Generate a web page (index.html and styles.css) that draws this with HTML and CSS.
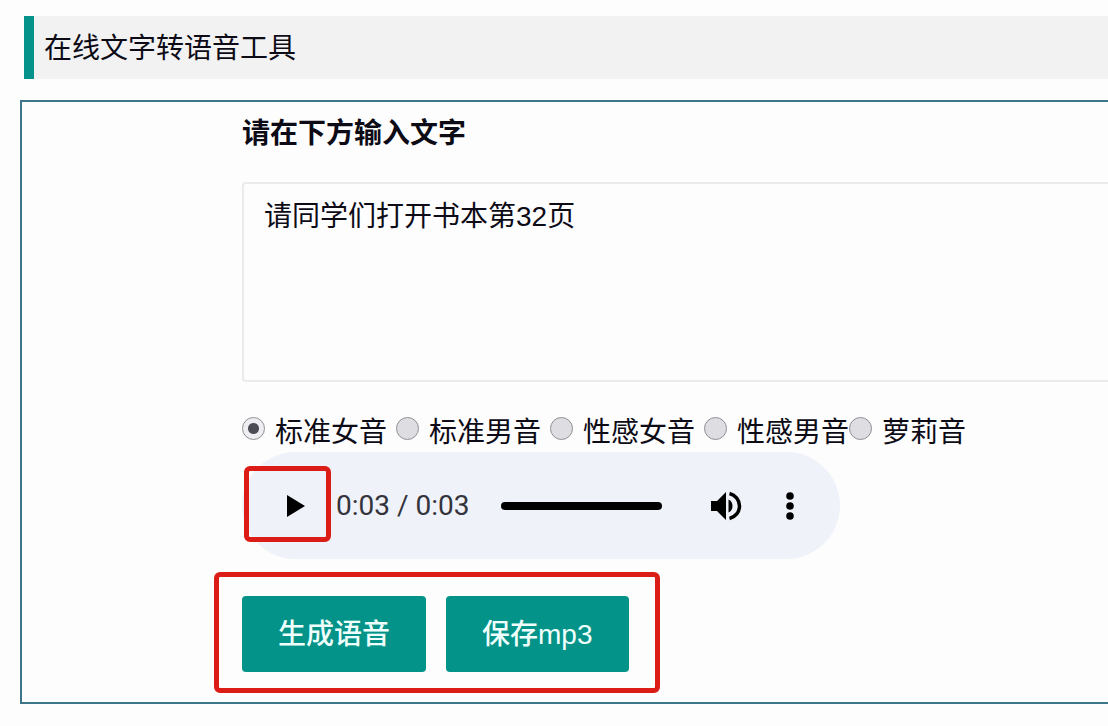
FILE: index.html
```html
<!DOCTYPE html>
<html lang="zh-CN">
<head>
<meta charset="utf-8">
<title>在线文字转语音工具</title>
<link rel="stylesheet" href="styles.css">
</head>
<body>
<h1 class="page-title">在线文字转语音工具</h1>
<main class="panel">
  <label class="field-label" for="source">请在下方输入文字</label>
  <textarea class="source" id="source">请同学们打开书本第32页</textarea>
  <div class="voices" role="radiogroup" aria-label="音色">
    <label class="voice"><input type="radio" name="voice" checked>标准女音</label>
    <label class="voice"><input type="radio" name="voice">标准男音</label>
    <label class="voice"><input type="radio" name="voice">性感女音</label>
    <label class="voice"><input type="radio" name="voice">性感男音</label>
    <label class="voice voice-last"><input type="radio" name="voice">萝莉音</label>
  </div>
  <div class="player">
    <button class="icon-button play" type="button" aria-label="播放">
      <svg width="20" height="24" viewBox="0 0 20 24"><path d="M1 1v22l18-11z"/></svg>
    </button>
    <span class="time">0:03 / 0:03</span>
    <span class="track"></span>
    <button class="icon-button volume" type="button" aria-label="音量">
      <svg width="32" height="30" viewBox="0 0 32 30"><path d="M1 10h6l9-9v28l-9-9H1z"/><path d="M18.500 8.500v13c2.500-1 4-3.500 4-6.500s-1.500-5.500-4-6.500z"/><path d="M19.500 2.500c6 1.500 10 6.500 10 12.500s-4 11-10 12.500" fill="none" stroke="#000" stroke-width="3.500"/></svg>
    </button>
    <button class="icon-button more" type="button" aria-label="更多">
      <svg width="8" height="28" viewBox="0 0 8 28"><circle cx="4" cy="4" r="3.800"/><circle cx="4" cy="14" r="3.800"/><circle cx="4" cy="24" r="3.800"/></svg>
    </button>
    <span class="mark mark-play"></span>
  </div>
  <div class="actions">
    <button class="action" type="button">生成语音</button>
    <button class="action" type="button">保存mp3</button>
    <span class="mark mark-actions"></span>
  </div>
</main>
</body>
</html>
```
FILE: styles.css
```css
* {
  box-sizing: border-box;
}

body {
  margin: 0;
  padding: 16px 0 20px 20px;
  background: #fdfdfd;
  color: #0c0b16;
  font: 28px/40px "Liberation Sans", "Noto Sans CJK SC", sans-serif;
}

button,
textarea {
  font: inherit;
}

.page-title {
  margin: 0 0 21px 4px;
  padding: 13px 10px 10px;
  border-left: 10px solid #05928b;
  background: #f2f2f3;
  font-size: 28px;
  font-weight: 400;
}

.panel {
  padding: 12px 0 30px 220px;
  border: 2px solid #3d7787;
  border-right: 0;
}

.field-label {
  display: block;
  font-weight: 700;
}

.source {
  display: block;
  width: 100%;
  height: 200px;
  margin: 28px 0 28px;
  padding: 13px 20px;
  border: 2px solid #ebebeb;
  border-right: 0;
  border-radius: 4px 0 0 4px;
  outline: 0;
  background: #fdfdfd;
  color: inherit;
  resize: none;
}

.voices {
  display: flex;
  gap: 9px;
  height: 42px;
}

.voice {
  display: flex;
  gap: 10px;
  line-height: 46px;
  white-space: nowrap;
}

.voice-last {
  margin-left: -9px;
}

.voice input {
  appearance: none;
  flex: none;
  width: 23px;
  height: 23px;
  margin: 7px 0 0;
  border: 1px solid #8f8f94;
  border-radius: 50%;
  background: #dedee2;
}

.voice input:checked {
  background: radial-gradient(circle, #4c4c55 5px, #eeeef2 6px);
}

.player {
  position: relative;
  display: flex;
  align-items: center;
  width: 598px;
  height: 107px;
  padding: 0 46px 0 44px;
  border-radius: 54px;
  background: #f0f2f9;
}

.icon-button {
  display: flex;
  padding: 0;
  border: 0;
  background: none;
}

.time {
  margin-left: 30px;
  color: #34343c;
  font-family: Roboto, sans-serif;
  white-space: nowrap;
}

.track {
  flex: 1;
  height: 8px;
  margin: 0 48px 0 32px;
  border-radius: 4px;
  background: #000;
}

.more {
  margin-left: 44px;
}

.actions {
  position: relative;
  display: flex;
  gap: 20px;
  width: max-content;
  margin-top: 37px;
}

.action {
  padding: 19px 36px 17px;
  border: 0;
  border-radius: 4px;
  background: #049388;
  color: #effffd;
  font-weight: 500;
}

.mark {
  position: absolute;
  border: 5px solid #dc1c17;
  border-radius: 6px;
  pointer-events: none;
}

.mark-play {
  top: 14px;
  left: 2px;
  width: 87px;
  height: 76px;
}

.mark-actions {
  inset: -24px -31px -21px -28px;
}
```
